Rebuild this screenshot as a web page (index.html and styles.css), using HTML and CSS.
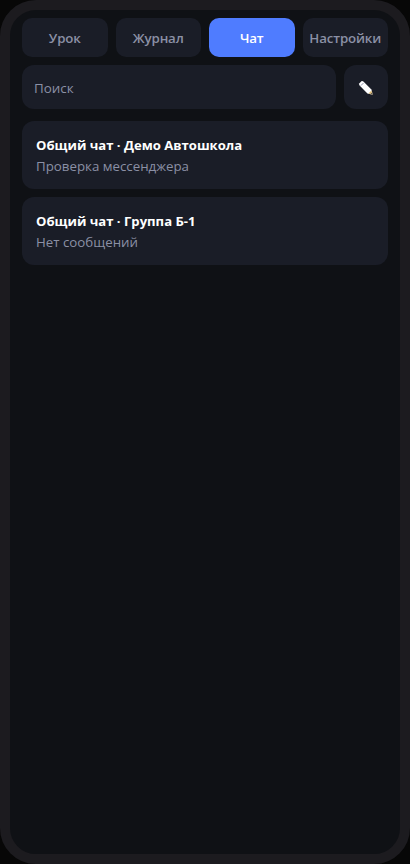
FILE: index.html
```html
<!DOCTYPE html>
<html lang="ru">
<head>
<meta charset="utf-8">
<title>Чат</title>
<link rel="stylesheet" href="styles.css">
</head>
<body>
<main class="phone">
  <nav class="tabs">
    <button class="tab">Урок</button>
    <button class="tab">Журнал</button>
    <button class="tab tab-active">Чат</button>
    <button class="tab">Настройки</button>
  </nav>
  <div class="search-row">
    <input class="search" type="text" placeholder="Поиск">
    <button class="compose" aria-label="Новый чат">
      <svg width="16" height="16" viewBox="0 0 16 16">
        <path d="M1.2 3.4 3.4 1.3Q4.4.8 5.4 1.6L13.4 9.4 14.8 14.8 9.4 13.4 1.6 5.4Q.8 4.4 1.2 3.4Z" fill="#fff"/>
        <path d="M2.9 5.6 5.6 2.9" stroke="#777b9c" stroke-width=".8"/>
        <path d="m13.4 10.6 1.4 4.2-4.2-1.4Z" fill="#d9b978"/>
        <path d="m14.1 12.8.7 2-2-.7Z" fill="#30303a"/>
      </svg>
    </button>
  </div>
  <section class="chats">
    <article class="chat">
      <div class="chat-title">Общий чат · Демо Автошкола</div>
      <div class="chat-preview">Проверка мессенджера</div>
    </article>
    <article class="chat">
      <div class="chat-title">Общий чат · Группа Б-1</div>
      <div class="chat-preview">Нет сообщений</div>
    </article>
  </section>
</main>
</body>
</html>
```

FILE: styles.css
```css
* { box-sizing: border-box; }
body {
  margin: 0;
  background: #070707;
  font-family: "Segoe UI", "Open Sans", "Noto Sans", sans-serif;
  font-size: 14px;
}
button, input { font: inherit; border: 0; margin: 0; }
.phone {
  width: 410px;
  height: 864px;
  padding: 8px 12px;
  border: 10px solid #1c1b1f;
  border-radius: 36px;
  background: #0f1115;
  overflow: hidden;
}
.tabs { display: grid; grid-template-columns: repeat(4, minmax(0, 1fr)); gap: 8px; }
.tab {
  height: 39px;
  padding: 0;
  border-radius: 10px;
  background: #1a1d27;
  color: #8b90a5;
  font-size: 13.3px;
  font-weight: 600;
  letter-spacing: -0.15px;
  white-space: nowrap;
}
.tab-active { background: #4f7cff; color: #fff; }
.search-row { display: flex; gap: 8px; margin-top: 8px; }
.search {
  flex: 1;
  min-width: 0;
  height: 44px;
  padding: 1px 12px 0;
  border-radius: 12px;
  background: #1a1d27;
  color: #fff;
  font-size: 13.4px;
}
.search::placeholder { color: #8b90a5; opacity: 1; }
.compose {
  display: flex;
  align-items: center;
  justify-content: center;
  width: 44px;
  height: 44px;
  padding: 1px 0 0;
  border-radius: 12px;
  background: #1a1d27;
}
.chats { display: grid; gap: 8px; margin-top: 12px; }
.chat { height: 68px; padding: 14px; border-radius: 12px; background: #1a1d27; }
.chat-title { color: #fff; font-size: 13.1px; font-weight: 700; line-height: 21px; }
.chat-preview { color: #8b90a5; font-size: 13.3px; line-height: 21px; }
```
